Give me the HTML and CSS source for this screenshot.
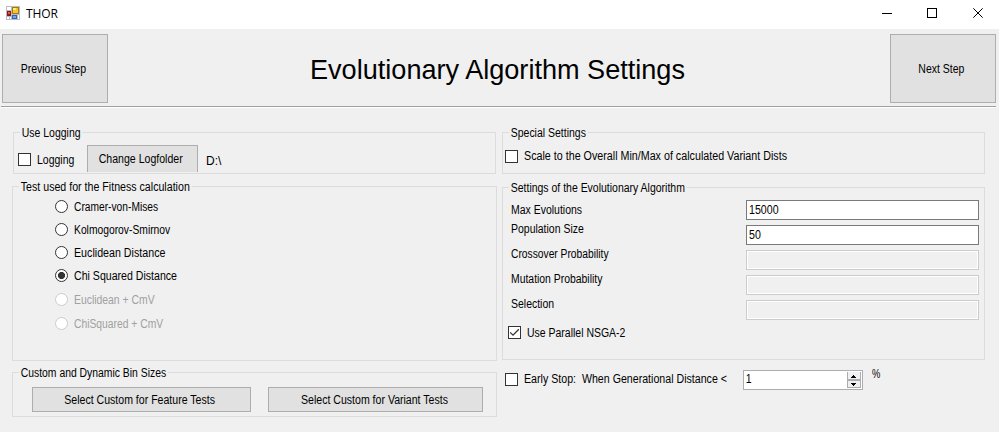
FILE: index.html
```html
<!DOCTYPE html>
<html lang="en">
<head>
<meta charset="utf-8">
<title>THOR</title>
<link rel="stylesheet" href="styles.css">
</head>
<body>
<div class="titlebar">
  <svg class="app-icon" width="14" height="14" viewBox="0 0 14 14" shape-rendering="crispEdges">
    <path fill="#b9bcc2" d="M0 0h14v14H0z"/>
    <path fill="#fff" d="M1 1h4v3H1zM1 11h2v2H1zM4 11h1v2H4zM12 9h1v4h-1z"/>
    <path fill="#8b1a12" d="M1 5h4v5H1z"/>
    <path fill="#d9604f" d="M2 6h2v2H2z"/>
    <path fill="#a87a08" d="M6 1h7v7H6z"/>
    <path fill="#f6c52c" d="M7 2h5v5H7z"/>
    <path fill="#fde88a" d="M7 2h3v2H7z"/>
    <path fill="#2f62c0" d="M6 9h5v4H6z"/>
    <path fill="#79a7ee" d="M7 10h3v2H7z"/>
  </svg>
  <span class="app-name">THOR</span>
  <svg class="controls" width="104" height="12" viewBox="0 0 104 12" fill="none" stroke="#000">
    <path d="M0 5.5h10M45.5 .5h9v9h-9z" shape-rendering="crispEdges"/>
    <path d="M91.3 .3l9.4 9.4M100.7 .3l-9.4 9.4"/>
  </svg>
</div>
<header class="header">
  <button class="btn step"><span class="t prev">Previous Step</span></button>
  <h1>Evolutionary Algorithm Settings</h1>
  <button class="btn step"><span class="t next">Next Step</span></button>
</header>
<main class="main">
  <div class="col">
    <section class="group logging">
      <h2 class="t">Use Logging</h2>
      <div class="row">
        <span class="check"></span><span class="t t-log">Logging</span>
        <button class="btn folder"><span class="t">Change Logfolder</span></button>
        <span class="t path">D:\</span>
      </div>
    </section>
    <section class="group tests">
      <h2 class="t">Test used for the Fitness calculation</h2>
      <div class="radios">
        <div class="radio"><i></i><span class="t r1">Cramer-von-Mises</span></div>
        <div class="radio"><i></i><span class="t r2">Kolmogorov-Smirnov</span></div>
        <div class="radio"><i></i><span class="t r3">Euclidean Distance</span></div>
        <div class="radio on"><i></i><span class="t r4">Chi Squared Distance</span></div>
        <div class="radio off"><i></i><span class="t r5">Euclidean + CmV</span></div>
        <div class="radio off"><i></i><span class="t r6">ChiSquared + CmV</span></div>
      </div>
    </section>
    <section class="group bins">
      <h2 class="t">Custom and Dynamic Bin Sizes</h2>
      <div class="bin-buttons">
        <button class="btn feature"><span class="t">Select Custom for Feature Tests</span></button>
        <button class="btn variant"><span class="t">Select Custom for Variant Tests</span></button>
      </div>
    </section>
  </div>
  <div class="col">
    <section class="group special">
      <h2 class="t">Special Settings</h2>
      <div class="row"><span class="check"></span><span class="t t-scale">Scale to the Overall Min/Max of calculated Variant Dists</span></div>
    </section>
    <section class="group evo">
      <h2 class="t">Settings of the Evolutionary Algorithm</h2>
      <div class="fields">
        <div class="labels">
          <div><span class="t">Max Evolutions</span></div>
          <div><span class="t">Population Size</span></div>
          <div><span class="t l3">Crossover Probability</span></div>
          <div><span class="t l4">Mutation Probability</span></div>
          <div><span class="t">Selection</span></div>
        </div>
        <div class="inputs">
          <div class="input"><span class="t">15000</span></div>
          <div class="input"><span class="t">50</span></div>
          <div class="input disabled"></div>
          <div class="input disabled"></div>
          <div class="input disabled"></div>
        </div>
      </div>
      <div class="row parallel">
        <span class="check"><svg width="11" height="11" viewBox="0 0 11 11"><path d="M1.2 5.4L4 8.2L9.8 2.3" fill="none" stroke="#333" stroke-width="1.3"/></svg></span><span class="t t-par">Use Parallel NSGA-2</span>
      </div>
    </section>
    <div class="row early">
      <span class="check"></span><span class="t-early"><span class="t">Early Stop:&nbsp; When Generational Distance &lt;</span></span>
      <div class="spinner"><span class="t">1</span>
        <svg width="14" height="16" viewBox="0 0 14 16" shape-rendering="crispEdges">
          <path fill="#acacac" d="M0 0h14v16H0z"/>
          <path fill="#f0f0f0" d="M1 0h12v7H1zM1 9h12v6H1z"/>
          <path fill="#000" d="M6 3h1v1H6zM5 4h3v1H5zM4 5h5v1H4zM4 11h5v1H4zM5 12h3v1H5zM6 13h1v1H6z"/>
        </svg>
      </div>
      <span class="t percent">%</span>
    </div>
  </div>
</main>
</body>
</html>
```
FILE: styles.css
```css
* { box-sizing: border-box; }
body {
  margin: 0;
  width: 999px;
  height: 432px;
  overflow: hidden;
  background: #f0f0f0;
  color: #000;
  font: 12px/14px "Liberation Sans", sans-serif;
  white-space: nowrap;
}
h1, h2 { margin: 0; font-weight: normal; }

/* Condensed interface text; --k is the horizontal scale. */
.t {
  --k: .873;
  display: inline-block;
  transform: scaleX(var(--k));
  transform-origin: 0 50%;
}
.btn .t { margin-right: 3px; transform-origin: 50% 50%; }

.titlebar { display: flex; height: 29px; background: #fff; }
.app-icon { margin: 6px 0 0 6px; }
.app-name { margin: 6px 0 0 6px; font: 12px/16px "Open Sans", sans-serif; letter-spacing: -.1px; }
.controls { margin: 8px 13px 0 auto; }
.btn {
  display: flex;
  align-items: center;
  justify-content: center;
  padding: 0;
  border: 1px solid #adadad;
  background: #e1e1e1;
  color: #000;
  font: inherit;
}
.header {
  display: flex;
  justify-content: space-between;
  height: 79px;
  margin: 0 3px 0 1px;
  padding: 5px 0 0 1px;
  border-bottom: 1px solid #fff;
  box-shadow: inset 0 -1px #a0a0a0;
}
.header h1 { padding: 20px 3px 0 0; font: 27.1px/32px "Liberation Sans", sans-serif; }
.step { width: 106px; height: 69px; }
.main { display: flex; gap: 5px; padding: 24px 0 0 12px; }
.col { width: 485px; }
.group { border: 1px solid #dcdcdc; }
.group h2 {
  display: block;
  width: max-content;
  margin: -7px 0 0 6px;
  padding: 0 2px;
  background: #f0f0f0;
  font-size: 12px;
  line-height: 14px;
}
.row { display: flex; }
.check { flex: none; width: 13px; height: 13px; border: 1px solid #333; background: #fff; }
.check svg { display: block; }
.logging { width: 483px; height: 42px; margin-left: 1px; }
.logging .row { padding-left: 4px; }
.logging .check { margin-top: 13px; }
.t-log { width: 50px; margin: 13px 0 0 6px; }
.folder { width: 111px; height: 27px; margin-top: 5px; border-bottom: 0; }
.path { --k: 1; margin: 14px 0 0 8px; }
.tests { height: 175px; margin-top: 12px; }
.tests h2 { --k: .886; }
.radios { padding: 1px 0 0 42px; }
.radio { display: flex; align-items: center; height: 23px; }
.radio i { width: 13px; height: 13px; margin-right: 6px; border: 1px solid #333; border-radius: 50%; background: #fff; }
.radio.on i { background: radial-gradient(circle, #333 3.2px, #fff 3.9px); }
.radio.off { margin-top: 1px; color: #a0a0a0; }
.radio.off i { border-color: #ccc; }
.r1 { --k: .852; }
.r2 { --k: .859; }
.r3 { --k: .89; }
.r4 { --k: .882; }
.r5 { --k: .866; }
.r6 { --k: .86; }
.bins { height: 45px; margin-top: 11px; }
.bins h2 { --k: .865; }
.bin-buttons { display: flex; gap: 17px; padding: 7px 0 0 19px; }
.bin-buttons .btn { height: 25px; }
.bin-buttons .t, .folder .t { --k: .88; }
.feature { width: 219px; }
.variant { width: 215px; }
.special { width: 483px; height: 42px; }
.special .row { padding: 10px 0 0 2px; }
.t-scale, .t-par, .t-early { margin-left: 6px; }
.t-scale { --k: .893; margin-top: -1px; }
.evo { width: 483px; height: 173px; margin-top: 13px; }
.fields { display: flex; justify-content: space-between; padding: 5px 5px 0 8px; }
.labels { padding-top: 3px; }
.labels div { height: 25px; }
.labels div:first-child { height: 19px; }
.l3 { --k: .855; }
.l4 { --k: .867; }
.inputs { display: grid; align-content: start; gap: 5px; width: 233px; }
.input { height: 20px; padding: 2px; border: 1px solid #7a7a7a; background: #fff; }
.input .t { --k: .885; }
.input.disabled { border-color: #ccc; background: #f0f0f0; box-shadow: inset 0 0 0 1px #fff; }
.parallel { padding: 4px 0 0 5px; }
.early { margin-top: 10px; padding-left: 3px; }
.early .check { margin-top: 3px; }
.t-early { width: 219px; margin-top: 2px; }
.t-early .t { --k: .886; }
.spinner { display: flex; justify-content: space-between; width: 120px; height: 20px; padding: 1px; border: 1px solid #abadb3; background: #fff; }
.spinner .t { padding: 0 1px; }
.percent { --k: .78; margin-left: 9px; margin-top: -3px; }
```
